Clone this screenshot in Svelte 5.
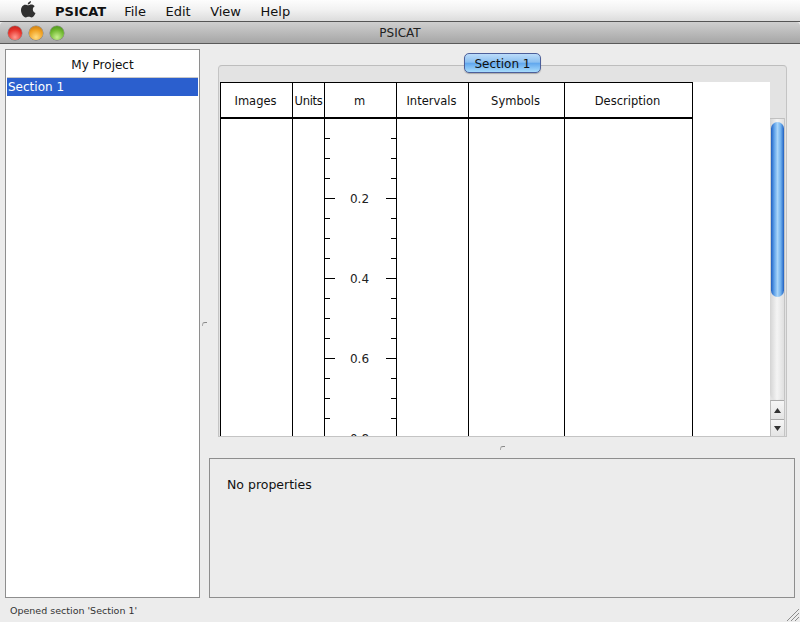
<script>
  const menus = ['File', 'Edit', 'View', 'Help']
  const columns = [
    { name: 'Images', width: 72 },
    { name: 'Units', width: 32 },
    { name: 'm', width: 72, ruler: true },
    { name: 'Intervals', width: 72 },
    { name: 'Symbols', width: 96 },
    { name: 'Description', width: 128 }
  ]
  // one tick every 0.05 m, every fourth one is labelled
  const ticks = Array.from({ length: 16 }, (_, i) => ({
    major: (i + 1) % 4 === 0,
    label: (((i + 1) / 4) * 0.2).toFixed(1)
  }))
</script>

<div class="screen">
  <div class="menubar">
    <svg class="apple" width="16" height="18" viewBox="0 0 16 18">
      <path d="M11 1c0 2-1.6 3.5-3.3 3.5C7.600 2.700 9.300 1.200 11 1zM8 5.300c.9 0 1.900-.8 3.300-.8 1.300 0 2.600.6 3.400 1.800-2.800 1.700-2.300 5.500.8 6.700-.7 1.800-2.200 4.500-3.900 4.500-1.100 0-1.600-.7-2.900-.7s-1.900.7-2.900.7C3.500 17.500 1 13.800 1 10.300 1 7 3 4.700 5.200 4.700c1.200 0 2.100.6 2.800.6z" />
    </svg>
    <b>PSICAT</b>
    {#each menus as m}
      <span>{m}</span>
    {/each}
  </div>

  <div class="titlebar">
    <div class="lights">
      <i class="light red"></i>
      <i class="light amber"></i>
      <i class="light green"></i>
    </div>
    <div class="title">PSICAT</div>
  </div>

  <div class="main">
    <div class="project">
      <div class="project-name">My Project</div>
      <div class="project-row">Section 1</div>
    </div>

    <div class="vsplit"><i class="grip"></i></div>

    <div class="right">
      <div class="tabs">
        <div class="tab">Section 1</div>
        <div class="pane">
          <div class="sheet">
            <div class="head">
              {#each columns as c}
                <div class="head-cell" style="width: {c.width}px">{c.name}</div>
              {/each}
              <div class="head-rest"></div>
            </div>
            <div class="body">
              <div class="rows">
                {#each columns as c}
                  <div class="col" style="width: {c.width}px">
                    {#if c.ruler}
                      <div class="ruler">
                        {#each ticks as t}
                          <div class="tick-row" class:major={t.major}>
                            <i></i>
                            {#if t.major}<span>{t.label}</span>{/if}
                            <i></i>
                          </div>
                        {/each}
                      </div>
                    {/if}
                  </div>
                {/each}
              </div>
              <div class="scrollbar">
                <div class="track"><div class="thumb"></div></div>
                <div class="arrow up">
                  <svg width="7" height="5" viewBox="0 0 7 5"><path d="M3.500 0 7 5H0z" /></svg>
                </div>
                <div class="arrow down">
                  <svg width="7" height="5" viewBox="0 0 7 5"><path d="M0 0h7L3.500 5z" /></svg>
                </div>
              </div>
            </div>
          </div>
        </div>
      </div>

      <div class="hsplit"><i class="grip"></i></div>

      <div class="props">No properties</div>
    </div>
  </div>

  <div class="status">
    <span>Opened section 'Section 1'</span>
    <svg class="resize" width="12" height="12" viewBox="0 0 12 12">
      <path d="M0 12 12 0M4 12l8-8M8 12l4-4" stroke="#8c8c8c" stroke-width="1" fill="none" />
    </svg>
  </div>
</div>

<style>
  :global(body) {
    margin: 0;
    background: #ececec;
  }
  .screen {
    width: 800px;
    height: 622px;
    display: flex;
    flex-direction: column;
    overflow: hidden;
    font-family: "DejaVu Sans", sans-serif;
    font-size: 11.5px;
    color: #111;
    background: #ececec;
  }

  .menubar {
    height: 20px;
    padding-top: 1px;
    flex: none;
    display: flex;
    align-items: center;
    padding-left: 20px;
    font-size: 13px;
    background: linear-gradient(#fdfdfd, #f2f2f2 45%, #dcdcdc);
    border-bottom: 1px solid #555;
  }
  .apple {
    fill: #303030;
    margin-right: 19px;
    margin-top: -4px;
  }
  .menubar b {
    font-size: 13px;
    margin-right: 18px;
  }
  .menubar span {
    margin-right: 19.5px;
  }

  .titlebar {
    height: 21px;
    flex: none;
    display: flex;
    align-items: center;
    background: linear-gradient(#cfcfcf, #a6a6a6);
    border-bottom: 1px solid #5a5a5a;
    border-radius: 4px 4px 0 0;
  }
  .lights {
    display: flex;
    gap: 7px;
    padding-left: 8px;
    width: 72px;
    flex: none;
    box-sizing: border-box;
  }
  .light {
    width: 14px;
    height: 14px;
    border-radius: 50%;
    box-shadow: 0 0 0 0.5px rgba(0, 0, 0, 0.35);
  }
  .red {
    background: radial-gradient(circle at 50% 80%, #ff9a90, #e8342c 55%, #a81c18);
  }
  .amber {
    background: radial-gradient(circle at 50% 80%, #ffdc80, #f0a020 55%, #b86e10);
  }
  .green {
    background: radial-gradient(circle at 50% 80%, #c8f090, #70b830 55%, #3f8418);
  }
  .title {
    flex: 1;
    text-align: center;
    padding-right: 72px;
    color: #222;
    font-size: 12px;
  }

  .main {
    height: 554px;
    flex: none;
    display: flex;
    padding: 5px 5px 0 5px;
    box-sizing: border-box;
  }
  .project {
    width: 195px;
    flex: none;
    box-sizing: border-box;
    background: #fff;
    border: 1px solid #8e8e8e;
    padding: 0 1px;
  }
  .project-name {
    height: 27px;
    line-height: 31px;
    font-size: 12px;
    text-align: center;
    border-bottom: 1px solid #c8c8c8;
  }
  .project-row {
    height: 18px;
    line-height: 18px;
    padding-left: 1px;
    background: #2b5fce;
    color: #fff;
    font-size: 12px;
  }

  .vsplit {
    width: 9px;
    flex: none;
    display: flex;
    align-items: center;
    justify-content: center;
  }
  .grip {
    display: block;
    width: 4px;
    height: 3px;
    border-top: 1px solid #888;
    border-left: 1px solid #aaa;
    border-radius: 3px 0 0 0;
  }

  .right {
    flex: 1;
    min-width: 0;
    display: flex;
    flex-direction: column;
  }
  .tabs {
    height: 384px;
    flex: none;
    padding: 4px 8px 0 9px;
    display: flex;
    flex-direction: column;
    align-items: center;
  }
  .tab {
    width: 77px;
    height: 20px;
    flex: none;
    box-sizing: border-box;
    margin-bottom: -8px;
    z-index: 1;
    text-align: center;
    line-height: 20px;
    font-size: 12px;
    border: 1px solid #4c5f9a;
    border-radius: 5px;
    background: linear-gradient(#bcdcfa, #8cc0f0 45%, #62a8ee 52%, #a8dcfc);
    box-shadow: 0 1px 1px rgba(0, 0, 0, 0.25);
  }
  .pane {
    width: 100%;
    flex: 1;
    min-height: 0;
    box-sizing: border-box;
    padding: 16px 0 0 1px;
    background: #e3e3e3;
    border: 1px solid #c4c4c4;
    border-top-color: #bdbdbd;
    border-radius: 4px 4px 0 0;
  }
  .sheet {
    height: 100%;
    display: flex;
    flex-direction: column;
  }
  .head {
    height: 37px;
    flex: none;
    display: flex;
  }
  .head-cell {
    flex: none;
    box-sizing: border-box;
    display: flex;
    align-items: center;
    justify-content: center;
    background: #fff;
    border-top: 1px solid #000;
    border-bottom: 2px solid #000;
    border-left: 1px solid #000;
    padding: 2px 2px 0 0;
  }
  .head-cell:nth-child(2) {
    padding: 2px 0 0;
    letter-spacing: -0.3px;
  }
  .head-rest {
    width: 78px;
    flex: none;
    background: #fff;
    border-left: 1px solid #000;
    box-sizing: border-box;
  }
  .body {
    flex: 1;
    min-height: 0;
    display: flex;
  }
  .rows {
    width: 550px;
    flex: none;
    display: flex;
    overflow: hidden;
    background: #fff;
  }
  .col {
    flex: none;
    box-sizing: border-box;
    border-left: 1px solid #000;
  }
  .col:last-child {
    border-right: 1px solid #000;
    width: 129px !important;
  }
  .ruler {
    padding-top: 9px;
    margin-right: -1px;
    border-right: 1px solid #000;
    height: 100%;
    box-sizing: border-box;
    font-size: 12px;
  }
  .tick-row {
    height: 20px;
    display: flex;
    align-items: center;
    justify-content: space-between;
  }
  .tick-row i {
    width: 5px;
    height: 1px;
    background: #000;
  }
  .tick-row.major i {
    width: 10px;
  }
  .tick-row span {
    color: #222;
    line-height: 20px;
    transform: translate(-1px, 1px);
  }

  .scrollbar {
    width: 15px;
    flex: none;
    display: flex;
    flex-direction: column;
    margin: -1px 1px 0 0;
    border-right: 1px solid #c4c4c4;
    box-sizing: border-box;
  }
  .track {
    flex: 1;
    min-height: 0;
    padding: 3px 0 0 1px;
    background: linear-gradient(90deg, #d4d4d4, #f4f4f4 50%, #e0e0e0);
    border-top: 1px solid #c0c0c0;
    border-radius: 0 0 7px 7px;
  }
  .thumb {
    height: 175px;
    border-radius: 7px;
    background: linear-gradient(90deg, #1f5fc0, #5fa2ea 25%, #a8d4f8 50%, #6fb0ee 75%, #1f5fc0);
  }
  .arrow {
    flex: none;
    box-sizing: border-box;
    display: flex;
    align-items: center;
    justify-content: center;
    background: linear-gradient(#f6f6f6, #e4e4e4);
    border-top: 1px solid #aaa;
    border-left: 1px solid #bbb;
  }
  .arrow.up {
    height: 19px;
  }
  .arrow.down {
    height: 17px;
  }
  .arrow svg {
    fill: #333;
  }

  .hsplit {
    height: 21px;
    flex: none;
    display: flex;
    align-items: center;
    justify-content: center;
  }
  .props {
    height: 140px;
    flex: none;
    box-sizing: border-box;
    padding: 18px 17px;
    border: 1px solid #8e8e8e;
    font-size: 12.5px;
  }

  .status {
    flex: 1;
    display: flex;
    align-items: center;
    padding-left: 10px;
    font-size: 9.5px;
    color: #333;
    position: relative;
  }
  .resize {
    position: absolute;
    right: 1px;
    bottom: 1px;
  }
</style>
